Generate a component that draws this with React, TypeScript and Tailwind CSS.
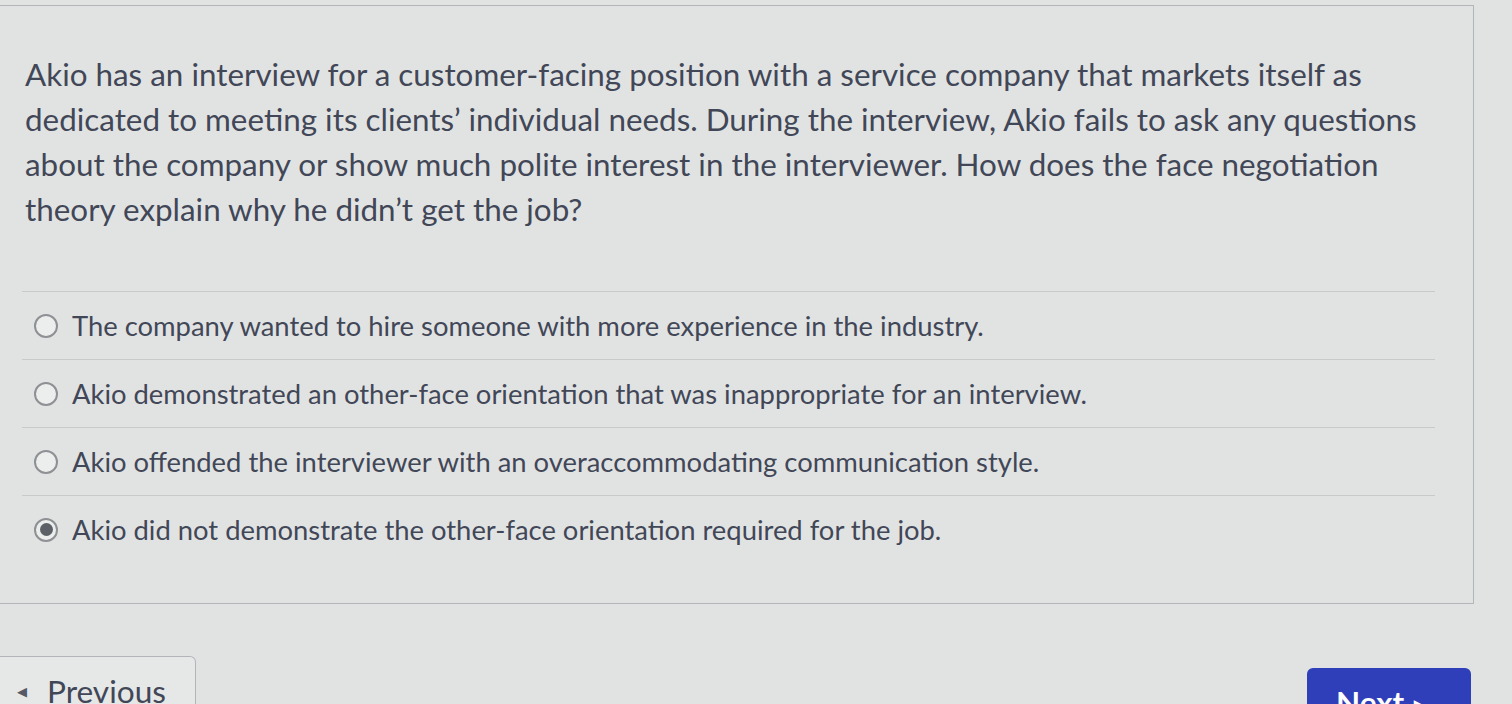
import { useState } from "react";

const question = [
  "Akio has an interview for a customer-facing position with a service company that markets itself as",
  "dedicated to meeting its clients\u2019 individual needs. During the interview, Akio fails to ask any questions",
  "about the company or show much polite interest in the interviewer. How does the face negotiation",
  "theory explain why he didn\u2019t get the job?",
];

const options = [
  "The company wanted to hire someone with more experience in the industry.",
  "Akio demonstrated an other-face orientation that was inappropriate for an interview.",
  "Akio offended the interviewer with an overaccommodating communication style.",
  "Akio did not demonstrate the other-face orientation required for the job.",
];

function Radio({ checked }: { checked: boolean }) {
  return (
    <span className="flex h-[24px] w-[24px] shrink-0 items-center justify-center rounded-full border-2 border-[#8d9194] bg-[#eceeee]">
      {checked && <span className="h-[13px] w-[13px] rounded-full bg-[#5b6166]" />}
    </span>
  );
}

export default function App() {
  const [picked, setPicked] = useState(3);

  return (
    <div className="h-[704px] w-[1512px] overflow-hidden bg-[#e1e3e3] font-['Lato','Noto_Sans',sans-serif] text-[#424757]">
      <div className="mt-[5px] w-[1474px] border-t border-r border-b border-[#b3b6b9] pb-[40px]">
        <div className="pl-[25px] pt-[46px] text-[31.4px] leading-[45px]">
          {question.map((line) => (
            <div key={line} className="whitespace-nowrap">
              {line}
            </div>
          ))}
        </div>

        <div className="ml-[22px] mt-[59px] w-[1413px]">
          {options.map((opt, i) => (
            <label
              key={opt}
              onClick={() => setPicked(i)}
              className="flex h-[68px] cursor-pointer items-center gap-[14px] border-t border-[#c8cbcc] pl-[12px] text-[27.4px]"
            >
              <Radio checked={picked === i} />
              <span className="whitespace-nowrap">{opt}</span>
            </label>
          ))}
        </div>
      </div>

      <div className="mt-[52px] flex items-start justify-between pr-[41px]">
        <button className="flex h-[70px] w-[196px] items-start gap-[20px] rounded-tr-[6px] border border-l-0 border-[#b3b6b9] bg-[#e6e8e8] pt-[14px] pl-[17px] text-[31.6px] text-[#424757]">
          <span className="mt-[14px] text-[13px] leading-none text-[#555a66]">{"\u25C0"}</span>
          <span className="leading-[40px]">Previous</span>
        </button>
        <button className="mt-[12px] flex h-[60px] w-[164px] items-start gap-[10px] rounded-[6px] bg-[#2f3fb9] pt-[14px] pl-[29px] text-[31.4px] font-bold text-white">
          <span className="leading-[40px]">Next</span>
          <span className="mt-[16px] text-[13px] leading-none">{"\u25B6"}</span>
        </button>
      </div>
    </div>
  );
}
